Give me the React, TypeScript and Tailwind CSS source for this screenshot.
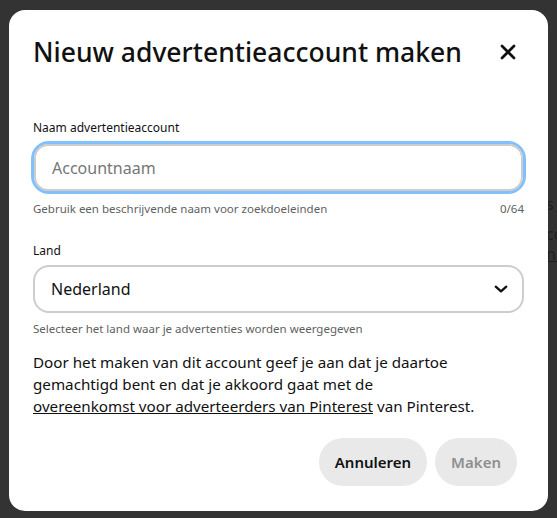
import { useState } from "react"

const font = "font-['Noto_Sans','Liberation_Sans',sans-serif]"

const CloseIcon = () => (
    <svg width="18" height="18" viewBox="0 0 24 24" aria-hidden="true">
        <path d="M4 4 L20 20 M20 4 L4 20" stroke="#111" strokeWidth="3.6" strokeLinecap="round" />
    </svg>
)

const Chevron = () => (
    <svg width="14" height="14" viewBox="0 0 24 24" aria-hidden="true">
        <path d="M3 8 L12 16 L21 8" stroke="#111" strokeWidth="4" fill="none" strokeLinecap="round" strokeLinejoin="round" />
    </svg>
)

const App = () => {
    const [name, setName] = useState("")

    return (
        <div className={`relative h-[518px] w-[557px] overflow-hidden bg-[#333333] pt-[10px] pl-[9px] ${font}`}>
            {/* stukje van de pagina achter de modal */}
            <div className="absolute right-0 top-[194px] w-[9px] overflow-hidden text-[16px] leading-[20px] text-[#1e1e1e]">
                <p className="-ml-[2px]">s</p>
                <p className="mt-[10px] -ml-[2px] whitespace-nowrap">co</p>
                <p className="-ml-[2px] whitespace-nowrap underline">na</p>
            </div>

            <div className="flex h-[501px] w-[539px] flex-col rounded-[16px] bg-white px-[24px] pt-[24px]">
                <div className="flex items-center justify-between">
                    <h1 className="text-[26.5px] leading-[36px] font-medium text-[#111]">Nieuw advertentieaccount maken</h1>
                    <button className="mr-[2px] flex h-[28px] w-[28px] items-center justify-center">
                        <CloseIcon />
                    </button>
                </div>

                <label className="mt-[50px] text-[12px] leading-[16px] text-[#111]">Naam advertentieaccount</label>
                <div className="mt-[5px] rounded-[18px] border-[3px] border-[#7fc1ff] -mx-[2px]">
                    <input
                        value={name}
                        onChange={(e) => setName(e.target.value)}
                        placeholder="Accountnaam"
                        className="h-[47px] w-full rounded-[14px] border-2 border-[#cdcdcd] px-[16px] text-[16px] text-[#111] outline-none placeholder:text-[#767676]"
                    />
                </div>
                <div className="mt-[7px] flex justify-between text-[11.5px] leading-[16px] text-[#5f5f5f]">
                    <span>Gebruik een beschrijvende naam voor zoekdoeleinden</span>
                    <span>{name.length}/64</span>
                </div>

                <label className="mt-[26px] text-[12px] leading-[16px] text-[#111]">Land</label>
                <div className="mt-[6px] flex h-[48px] items-center justify-between rounded-[16px] border-2 border-[#cdcdcd] pl-[16px] pr-[14px]">
                    <span className="text-[16px] text-[#111]">Nederland</span>
                    <Chevron />
                </div>
                <p className="mt-[8px] text-[11.5px] leading-[16px] text-[#5f5f5f]">Selecteer het land waar je advertenties worden weergegeven</p>

                <p className="mt-[14px] text-[15.2px] leading-[22px] text-[#111]">
                    Door het maken van dit account geef je aan dat je daartoe
                    <br />
                    gemachtigd bent en dat je akkoord gaat met de
                    <br />
                    <a className="underline">overeenkomst voor adverteerders van Pinterest</a> van Pinterest.
                </p>

                <div className="mt-[21px] flex justify-end gap-[8px] pr-[7px]">
                    <button className="h-[48px] rounded-full bg-[#e9e9e9] px-[16px] text-[15px] font-semibold text-[#111]">Annuleren</button>
                    <button disabled className="h-[48px] rounded-full bg-[#e9e9e9] px-[16px] text-[15px] font-semibold text-[#8f8f8f]">Maken</button>
                </div>
            </div>
        </div>
    )
}

export default App
